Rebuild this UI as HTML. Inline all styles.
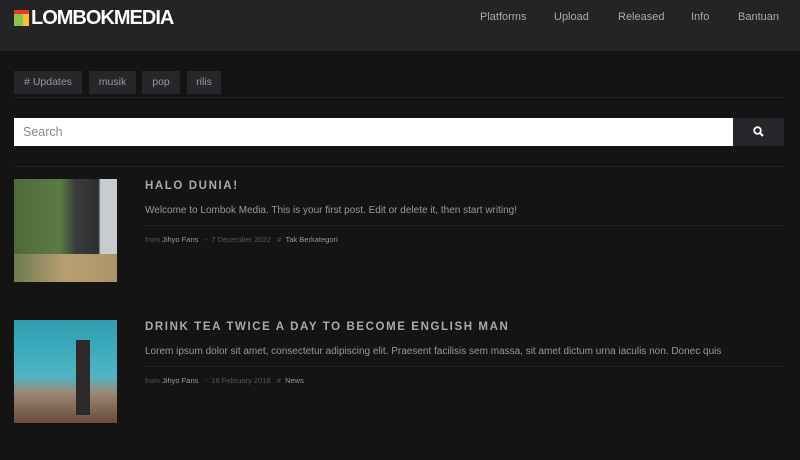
<!DOCTYPE html>
<html><head><meta charset="utf-8"><style>
*{margin:0;padding:0;box-sizing:border-box}
body{width:800px;height:460px;background:#141415;font-family:"Liberation Sans",sans-serif;overflow:hidden;position:relative;color:#ccc}
.hdr{position:absolute;left:0;top:0;width:800px;height:51px;background:#232426}
.logo{position:absolute;left:31px;top:7px;font-size:20px;color:#fff;letter-spacing:-1px;font-weight:bold}
.lg{position:absolute;left:14px;top:10px;width:15px;height:16px;background:#8bc34a}
.lg:before{content:"";position:absolute;left:0;top:0;width:15px;height:4px;background:#e53935}
.lg:after{content:"";position:absolute;right:0;top:4px;width:6px;height:12px;background:#fbc02d}
.nav a{position:absolute;top:11px;font-size:11px;color:#aaa;text-decoration:none}
.tag{position:absolute;top:71px;height:23px;background:#26272a;color:#999;font-size:10.5px;line-height:23px;text-align:center}
.hr{position:absolute;left:14px;width:770px;height:1px;background:#232427}
.search{position:absolute;left:14px;top:118px;width:719px;height:28px;background:#fff;color:#888;font-size:12.5px;line-height:28px;padding-left:9px}
.btn{position:absolute;left:733px;top:118px;width:51px;height:28px;background:#26272a}
.img{position:absolute;left:14px;width:103px;height:103px}
.t{position:absolute;left:145px;font-size:11.5px;font-weight:bold;letter-spacing:1.6px;color:#aaa}
.e{position:absolute;left:145px;font-size:10px;color:#999}
.d{position:absolute;left:145px;width:639px;height:1px;background:#222326}
.m{position:absolute;left:145px;font-size:7.5px;color:#555}
.m b{font-weight:normal;color:#999}
</style></head><body>
<div class="hdr"></div>
<div class="lg"></div>
<div class="logo">LOMBOKMEDIA</div>
<div class="nav"><a style="left:480px">Platforms</a><a style="left:554px">Upload</a><a style="left:618px">Released</a><a style="left:691px">Info</a><a style="left:738px">Bantuan</a></div>
<div class="tag" style="left:14px;width:68px"># Updates</div>
<div class="tag" style="left:89px;width:47px">musik</div>
<div class="tag" style="left:142px;width:38px">pop</div>
<div class="tag" style="left:187px;width:34px">rilis</div>
<div class="hr" style="top:97px"></div>
<div class="search">Search</div>
<div class="btn"><svg width="51" height="28"><circle cx="24.5" cy="12.5" r="3.3" fill="none" stroke="#fff" stroke-width="1.8"/><path d="M27 15l3 3" stroke="#fff" stroke-width="2"/></svg></div>
<div class="hr" style="top:166px"></div>
<div class="img" style="top:179px;background:linear-gradient(90deg,#4f6a3a 0,#5b7a45 45%,#3a3c3e 60%,#2c2e30 82%,#c8ccce 84%);"><div style="position:absolute;left:0;bottom:0;width:103px;height:28px;background:linear-gradient(90deg,#6d7a50,#b9a070 50%,#a9946a)"></div></div>
<div class="t" style="top:180px">HALO DUNIA!</div>
<div class="e" style="top:205px">Welcome to Lombok Media. This is your first post. Edit or delete it, then start writing!</div>
<div class="d" style="top:225px"></div>
<div class="m" style="top:235px">from <b>Jihyo Fans</b> &nbsp; - &nbsp;7 December 2022 &nbsp; # &nbsp;<b>Tak Berkategori</b></div>
<div class="img" style="top:320px;background:linear-gradient(180deg,#2a9fb0 0,#4fb5c2 55%,#9a8a78 70%,#6b4a38 100%)"><div style="position:absolute;left:62px;top:20px;width:14px;height:75px;background:#2b2a28"></div></div>
<div class="t" style="top:321px">DRINK TEA TWICE A DAY TO BECOME ENGLISH MAN</div>
<div class="e" style="top:346px">Lorem ipsum dolor sit amet, consectetur adipiscing elit. Praesent facilisis sem massa, sit amet dictum urna iaculis non. Donec quis</div>
<div class="d" style="top:366px"></div>
<div class="m" style="top:376px">from <b>Jihyo Fans</b> &nbsp; - &nbsp;16 February 2018 &nbsp; # &nbsp;<b>News</b></div>
</body></html>
